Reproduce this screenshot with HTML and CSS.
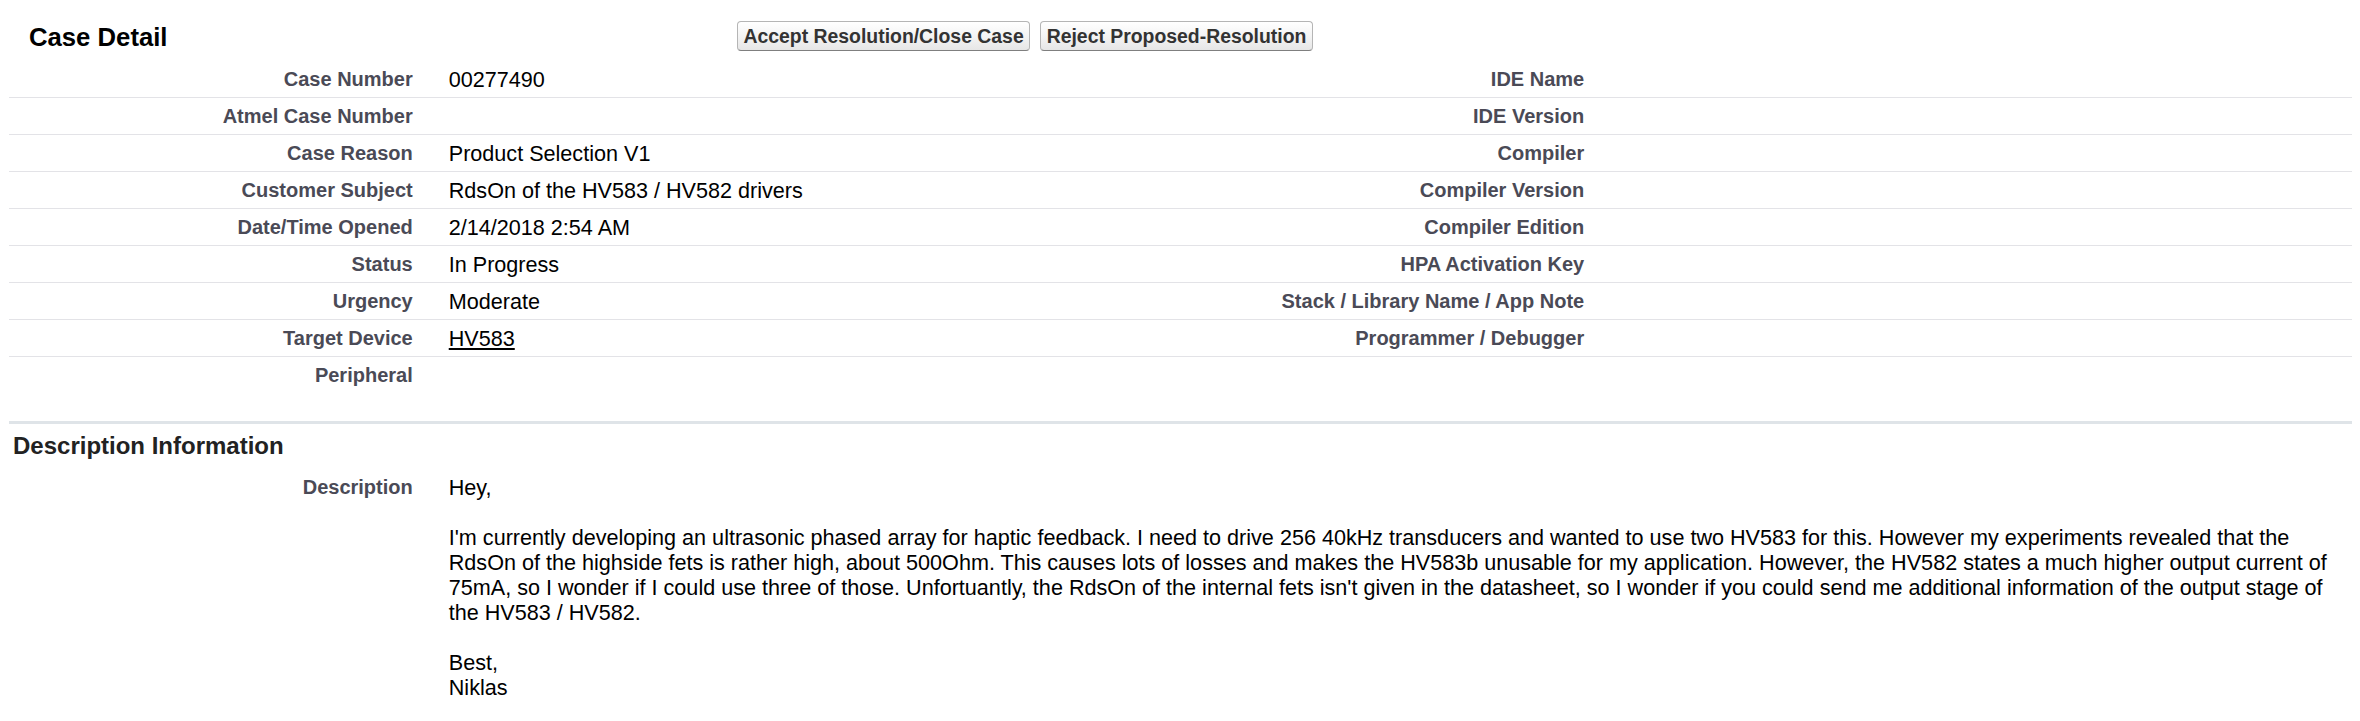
FILE: index.html
```html
<!DOCTYPE html>
<html lang="en">
<head>
    <meta charset="UTF-8">
    <title>Case Detail</title>
    <link rel="stylesheet" href="styles.css">
</head>
<body>
    <div class="page">
        <div class="block-header">
            <h2 class="block-title">Case Detail</h2>
            <div class="block-buttons">
                <button class="btn" type="button">Accept Resolution/Close Case</button>
                <button class="btn" type="button">Reject Proposed-Resolution</button>
            </div>
        </div>

        <table class="detail-list">
            <colgroup>
                <col class="col-label">
                <col class="col-data">
                <col class="col-label">
                <col class="col-data">
            </colgroup>
            <tr>
                <td class="label-col">Case Number</td>
                <td class="data-col">00277490</td>
                <td class="label-col">IDE Name</td>
                <td class="data-col">&nbsp;</td>
            </tr>
            <tr>
                <td class="label-col">Atmel Case Number</td>
                <td class="data-col">&nbsp;</td>
                <td class="label-col">IDE Version</td>
                <td class="data-col">&nbsp;</td>
            </tr>
            <tr>
                <td class="label-col">Case Reason</td>
                <td class="data-col">Product Selection V1</td>
                <td class="label-col">Compiler</td>
                <td class="data-col">&nbsp;</td>
            </tr>
            <tr>
                <td class="label-col">Customer Subject</td>
                <td class="data-col">RdsOn of the HV583 / HV582 drivers</td>
                <td class="label-col">Compiler Version</td>
                <td class="data-col">&nbsp;</td>
            </tr>
            <tr>
                <td class="label-col">Date/Time Opened</td>
                <td class="data-col">2/14/2018 2:54 AM</td>
                <td class="label-col">Compiler Edition</td>
                <td class="data-col">&nbsp;</td>
            </tr>
            <tr>
                <td class="label-col">Status</td>
                <td class="data-col">In Progress</td>
                <td class="label-col">HPA Activation Key</td>
                <td class="data-col">&nbsp;</td>
            </tr>
            <tr>
                <td class="label-col">Urgency</td>
                <td class="data-col">Moderate</td>
                <td class="label-col">Stack / Library Name / App Note</td>
                <td class="data-col">&nbsp;</td>
            </tr>
            <tr>
                <td class="label-col">Target Device</td>
                <td class="data-col"><a href="#" class="record-link">HV583</a></td>
                <td class="label-col">Programmer / Debugger</td>
                <td class="data-col">&nbsp;</td>
            </tr>
            <tr class="last-row">
                <td class="label-col">Peripheral</td>
                <td class="data-col">&nbsp;</td>
                <td class="label-col">&nbsp;</td>
                <td class="data-col">&nbsp;</td>
            </tr>
        </table>

        <div class="sub-section">
            <h3 class="sub-header">Description Information</h3>
            <table class="detail-list">
                <colgroup>
                    <col class="col-label">
                    <col class="col-data">
                    <col class="col-label">
                    <col class="col-data">
                </colgroup>
                <tr class="last-row">
                    <td class="label-col">Description</td>
                    <td class="data-col" colspan="3">Hey,<br><br>I'm currently developing an ultrasonic phased array for haptic feedback. I need to drive 256 40kHz transducers and wanted to use two HV583 for this. However my experiments revealed that the RdsOn of the highside fets is rather high, about 500Ohm. This causes lots of losses and makes the HV583b unusable for my application. However, the HV582 states a much higher output current of 75mA, so I wonder if I could use three of those. Unfortuantly, the RdsOn of the internal fets isn't given in the datasheet, so I wonder if you could send me additional information of the output stage of the HV583 / HV582.<br><br>Best,<br>Niklas</td>
                </tr>
            </table>
        </div>
    </div>
</body>
</html>
```

FILE: styles.css
```css
* {
    box-sizing: border-box;
}

body {
    margin: 0;
    background: #fff;
    font-family: 'Liberation Sans', Arial, sans-serif;
    color: #000;
}

.page {
    margin: 0 8px 0 9px;
}

/* header with title and buttons */
.block-header {
    display: flex;
    align-items: flex-start;
    height: 61px;
    padding-top: 21px;
}

.block-title {
    width: 728px;
    margin: 0;
    padding-left: 20px;
    font-size: 25.7px;
    line-height: 32px;
    font-weight: bold;
    color: #000;
}

.block-buttons {
    display: flex;
    gap: 10px;
}

.btn {
    font-family: inherit;
    font-size: 19.4px;
    font-weight: bold;
    line-height: 22px;
    color: #333;
    padding: 3px 5.5px;
    border: 1px solid #b5b5b5;
    border-bottom-color: #7f7f7f;
    border-radius: 4px;
    background: linear-gradient(to bottom, #ffffff 0%, #f4f4f4 50%, #e6e6e6 100%);
    cursor: pointer;
}

/* field rows */
.detail-list {
    width: 100%;
    border-collapse: collapse;
    table-layout: fixed;
}

.col-label {
    width: 18%;
}

.col-data {
    width: 32%;
}

.detail-list td {
    vertical-align: top;
    border-bottom: 1px solid #e3e3e7;
    line-height: 25px;
}

.detail-list .last-row td {
    border-bottom: none;
}

.label-col {
    text-align: right;
    padding: 6px 18px 5px 4px;
    font-size: 20px;
    font-weight: bold;
    color: #4a4a56;
}

.data-col {
    padding: 5.5px 4px 5.5px 18px;
    font-size: 21.6px;
    color: #000;
}

.record-link {
    color: #000;
    text-decoration: underline;
}

/* description block */
.sub-section {
    margin-top: 28px;
    border-top: 3px solid #dfe4e8;
}

.sub-header {
    margin: 0;
    padding: 7.5px 4px 10.3px;
    font-size: 24px;
    line-height: 27.6px;
    font-weight: bold;
    color: #222;
}
```
